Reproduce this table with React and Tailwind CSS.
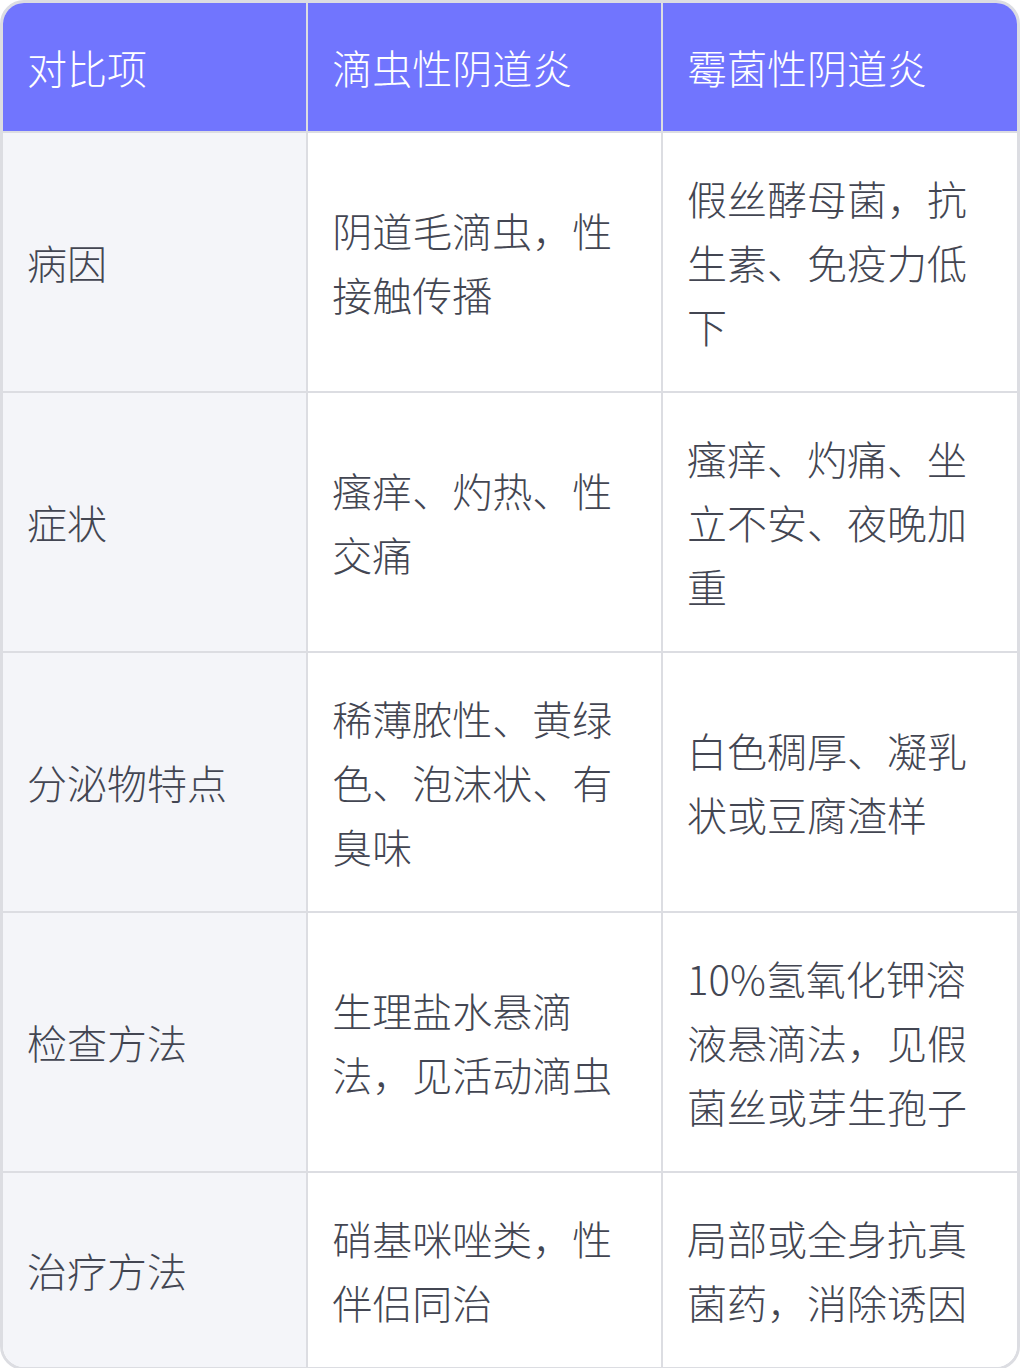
const ROWS = [
  ['病因', '阴道毛滴虫，性接触传播', '假丝酵母菌，抗生素、免疫力低下'],
  ['症状', '瘙痒、灼热、性交痛', '瘙痒、灼痛、坐立不安、夜晚加重'],
  ['分泌物特点', '稀薄脓性、黄绿色、泡沫状、有臭味', '白色稠厚、凝乳状或豆腐渣样'],
  ['检查方法', '生理盐水悬滴法，见活动滴虫', '10%氢氧化钾溶液悬滴法，见假菌丝或芽生孢子'],
  ['治疗方法', '硝基咪唑类，性伴侣同治', '局部或全身抗真菌药，消除诱因'],
]

export default function App() {
  return (
    <div
      className="w-[1020px] h-[1368px] bg-white"
      style={{ fontFamily: '"Noto Sans CJK SC Light", "Noto Sans CJK SC DemiLight", "Noto Sans CJK SC", "Noto Sans", sans-serif' }}
    >
      <div className="rounded-[24px] border-[3px] border-[#dcdde2] overflow-hidden">
        <table className="w-full border-collapse table-fixed text-[40px] leading-[64px] font-light">
          <colgroup>
            <col className="w-[30%]" />
            <col className="w-[35%]" />
            <col className="w-[35%]" />
          </colgroup>
          <thead>
            <tr className="bg-[#7175fe] text-white">
              <th className="px-6 py-8 text-left font-light border-r-2 border-b-2 border-[#dcdde2]">对比项</th>
              <th className="px-6 py-8 text-left font-light border-r-2 border-b-2 border-[#dcdde2]">滴虫性阴道炎</th>
              <th className="px-6 py-8 text-left font-light border-b-2 border-[#dcdde2]">霉菌性阴道炎</th>
            </tr>
          </thead>
          <tbody className="text-[#434652]">
            {ROWS.map((row, i) => {
              const last = i === ROWS.length - 1
              return (
                <tr key={row[0]}>
                  <td className={`px-6 py-[33px] align-middle bg-[#f4f5f9] border-r-2 border-[#dcdde2] ${last ? '' : 'border-b-2'}`}>
                    {row[0]}
                  </td>
                  <td className={`px-6 py-[33px] align-middle bg-white border-r-2 border-[#dcdde2] ${last ? '' : 'border-b-2'}`}>
                    {row[1]}
                  </td>
                  <td className={`px-6 py-[33px] align-middle bg-white border-[#dcdde2] ${last ? '' : 'border-b-2'}`}>
                    {row[2]}
                  </td>
                </tr>
              )
            })}
          </tbody>
        </table>
      </div>
    </div>
  )
}
